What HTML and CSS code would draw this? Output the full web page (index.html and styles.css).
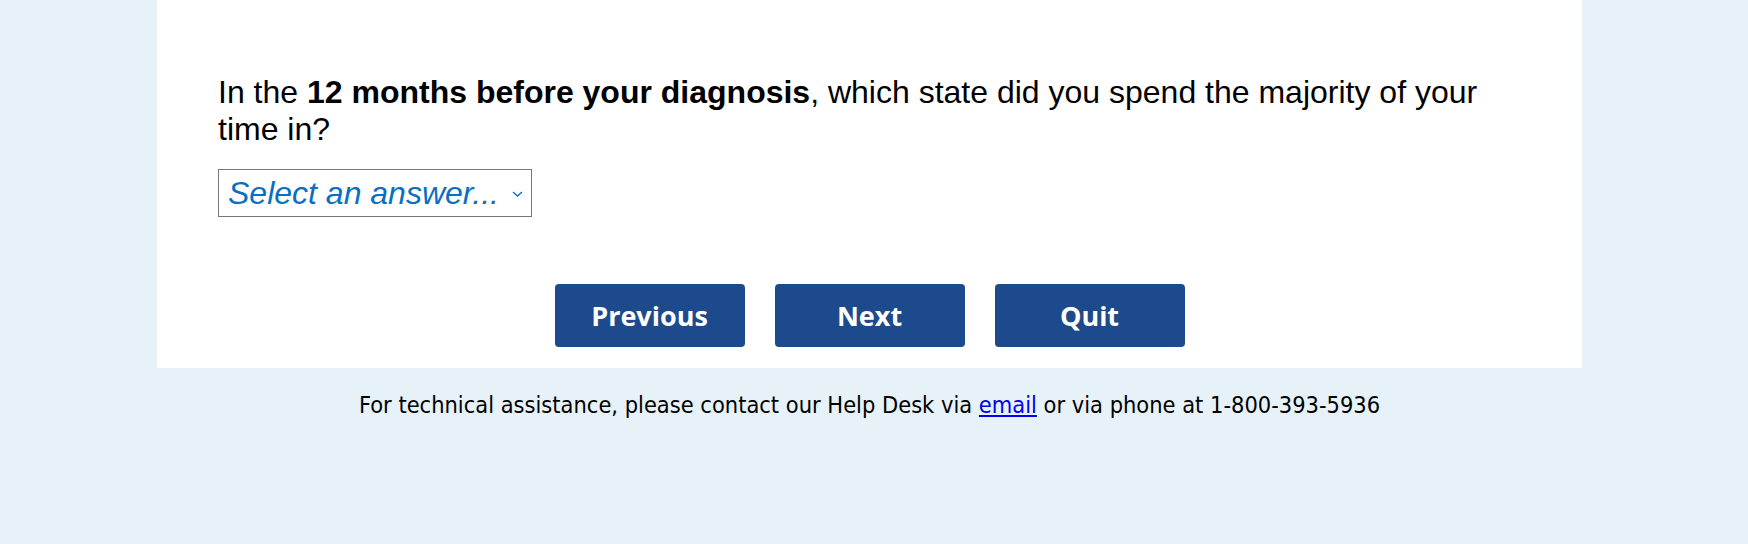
FILE: index.html
```html
<!DOCTYPE html>
<html lang="en">
<head>
    <meta charset="UTF-8">
    <meta name="viewport" content="width=device-width, initial-scale=1.0">
    <title>Survey</title>
    <link rel="stylesheet" href="styles.css">
</head>
<body>
    <div class="page">
        <div class="panel">
            <p class="question">In the <strong>12 months before your diagnosis</strong>, which state did you spend the majority of your time in?</p>

            <div class="select-wrap">
                <select class="answer" id="state">
                    <option>Select an answer...</option>
                </select>
                <svg class="chevron" width="11" height="6" viewBox="0 0 11 6">
                    <path d="M1 1 L5.5 5 L10 1" fill="none" stroke="#0a6fc2" stroke-width="1.4"/>
                </svg>
            </div>

            <div class="buttons">
                <button class="btn">Previous</button>
                <button class="btn">Next</button>
                <button class="btn">Quit</button>
            </div>
        </div>

        <p class="help">For technical assistance, please contact our Help Desk via <a href="#">email</a> or via phone at 1-800-393-5936</p>
    </div>
</body>
</html>
```

FILE: styles.css
```css
* {
    box-sizing: border-box;
}

body {
    margin: 0;
    background: #e7f2f8;
    font-family: "Liberation Sans", Arial, sans-serif;
}

.page {
    margin: 0 166px 0 157px;
}

.panel {
    background: #fff;
    padding: 74px 61px 21px;
}

.question {
    margin: 0;
    font-size: 32px;
    line-height: 37px;
    color: #000;
}

.select-wrap {
    position: relative;
    width: 314px;
    margin-top: 21px;
}

.answer {
    appearance: none;
    -webkit-appearance: none;
    display: block;
    width: 314px;
    height: 48px;
    padding: 0 0 0 9px;
    border: 1px solid #777;
    border-radius: 0;
    background: #fff;
    font-family: "Liberation Sans", Arial, sans-serif;
    font-size: 32px;
    font-style: italic;
    color: #0a6fc2;
}

.chevron {
    position: absolute;
    right: 9px;
    top: 22px;
    pointer-events: none;
}

.buttons {
    display: flex;
    justify-content: center;
    gap: 30px;
    margin-top: 67px;
}

.btn {
    width: 190px;
    height: 63px;
    border: none;
    border-radius: 4px;
    background: #1d4a8c;
    color: #fff;
    font-family: "Open Sans", sans-serif;
    font-weight: 700;
    font-size: 27px;
    cursor: pointer;
}

.help {
    margin: 0;
    padding-top: 23px;
    text-align: center;
    font-family: "DejaVu Sans Condensed", "DejaVu Sans", sans-serif;
    font-size: 23.4px;
    color: #000;
}

.help a {
    color: #0000ee;
}
```
